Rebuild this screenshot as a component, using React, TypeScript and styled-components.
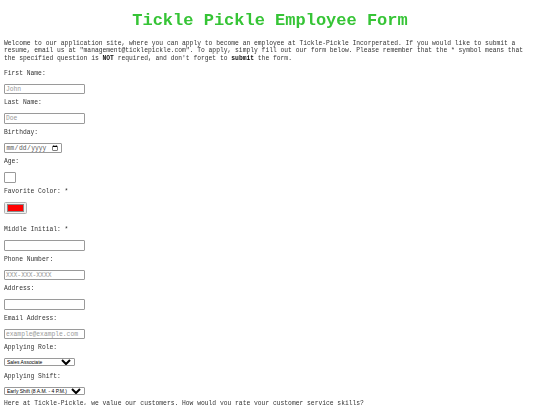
import React from "react";
import styled, { createGlobalStyle } from "styled-components";

const GlobalStyle = createGlobalStyle`
  html, body { margin: 0; padding: 0; background: #ffffff; }
  body { overflow: hidden; }
`;

/* The page is designed at double scale and zoomed to half, like the reference. */
const Page = styled.div`
  zoom: 0.5;
  padding: 0 8px 8px;
  font-family: "Liberation Mono", "Courier New", monospace;
  font-size: 12.65px;
  color: #333;
`;

const Title = styled.h1`
  margin: 21px 0 0;
  text-align: center;
  font-family: "Liberation Mono", "Courier New", monospace;
  font-size: 34px;
  line-height: 38px;
  font-weight: bold;
  color: #36c436;
  will-change: transform;
`;

const Intro = styled.p`
  margin: 21px 0 0;
  line-height: 14.6px;
  will-change: transform;
  b { color: #111; }
`;

const Form = styled.form`
  display: flex;
  flex-direction: column;
  align-items: flex-start;
  margin-top: 18px;
`;

const Field = styled.div<{ $after?: number }>`
  display: flex;
  flex-direction: column;
  align-items: flex-start;
  gap: 13px;
  margin-bottom: ${(p) => p.$after ?? 12}px;
`;

const Label = styled.label`
  display: block;
  line-height: 13px;
  color: #333;
  will-change: transform;
`;

const TextInput = styled.input<{ $w?: number }>`
  box-sizing: border-box;
  width: ${(p) => p.$w ?? 162}px;
  height: 21px;
  padding: 1px 2px;
  border: 2px solid #9a9a9a;
  border-radius: 2px;
  font-family: "Liberation Mono", "Courier New", monospace;
  font-size: 12.65px;
  color: #000;
  background: #fff;
  &::placeholder { color: #9a9a9a; }
`;

const DateInput = styled.input`
  box-sizing: border-box;
  width: 115px;
  height: 21px;
  padding: 1px 2px;
  border: 2px solid #9a9a9a;
  border-radius: 2px;
  font-family: "Liberation Mono", "Courier New", monospace;
  font-size: 12.65px;
  color: #555;
  background: #fff;
`;

const ColorInput = styled.input`
  box-sizing: border-box;
  width: 46px;
  height: 25px;
  padding: 3px 4px;
  border: 2px solid #b0b0b0;
  border-radius: 3px;
  background: #efefef;
  &::-webkit-color-swatch-wrapper { padding: 0; }
  &::-webkit-color-swatch {
    border: 1px solid #8a8a8a;
    border-radius: 0;
  }
`;

const Select = styled.select<{ $w: number }>`
  box-sizing: border-box;
  width: ${(p) => p.$w}px;
  height: 16px;
  font-family: "Liberation Sans", Arial, sans-serif;
  font-size: 10px;
  padding: 0;
  border: 2px solid #9a9a9a;
  border-radius: 2px;
  background: #fff;
  color: #000;
`;

const Question = styled.p`
  margin: 0;
  line-height: 13px;
  color: #333;
  will-change: transform;
`;

export default function App() {
  return (
    <>
      <GlobalStyle />
      <Page>
        <Title>Tickle Pickle Employee Form</Title>
        <Intro>
          Welcome to our application site, where you can apply to become an employee at
          Tickle-Pickle Incorperated. If you would like to submit a resume, email us at
          "management@ticklepickle.com". To apply, simply fill out our form below. Please
          remember that the * symbol means that the specified question is <b>NOT</b> required,
          and don't forget to <b>submit</b> the form.
        </Intro>
        <Form onSubmit={(e) => e.preventDefault()}>
          <Field>
            <Label htmlFor="first">First Name:</Label>
            <TextInput id="first" type="text" placeholder="John" />
          </Field>
          <Field>
            <Label htmlFor="last">Last Name:</Label>
            <TextInput id="last" type="text" placeholder="Doe" />
          </Field>
          <Field>
            <Label htmlFor="birthday">Birthday:</Label>
            <DateInput id="birthday" type="date" />
          </Field>
          <Field>
            <Label htmlFor="age">Age:</Label>
            <TextInput id="age" type="text" $w={24} />
          </Field>
          <Field $after={26}>
            <Label htmlFor="color">Favorite Color: *</Label>
            <ColorInput id="color" type="color" defaultValue="#ff0000" />
          </Field>
          <Field>
            <Label htmlFor="middle">Middle Initial: *</Label>
            <TextInput id="middle" type="text" />
          </Field>
          <Field>
            <Label htmlFor="phone">Phone Number:</Label>
            <TextInput id="phone" type="text" placeholder="XXX-XXX-XXXX" />
          </Field>
          <Field>
            <Label htmlFor="address">Address:</Label>
            <TextInput id="address" type="text" />
          </Field>
          <Field>
            <Label htmlFor="email">Email Address:</Label>
            <TextInput id="email" type="email" placeholder="example@example.com" />
          </Field>
          <Field $after={16}>
            <Label htmlFor="role">Applying Role:</Label>
            <Select id="role" $w={142} defaultValue="sales">
              <option value="sales">Sales Associate</option>
              <option value="cashier">Cashier</option>
              <option value="stock">Stock Clerk</option>
            </Select>
          </Field>
          <Field $after={12}>
            <Label htmlFor="shift">Applying Shift:</Label>
            <Select id="shift" $w={162} defaultValue="early">
              <option value="early">Early Shift (8 A.M. - 4 P.M.)</option>
              <option value="late">Late Shift (4 P.M. - 12 A.M.)</option>
            </Select>
          </Field>
          <Question>
            Here at Tickle-Pickle, we value our customers. How would you rate your customer
            service skills?
          </Question>
        </Form>
      </Page>
    </>
  );
}
